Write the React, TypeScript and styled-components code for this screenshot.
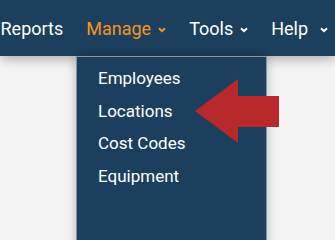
import React from "react";
import styled, { createGlobalStyle } from "styled-components";

const Global = createGlobalStyle`
  html, body { margin: 0; padding: 0; }
  body {
    background: #f4f4f4;
    font-family: Roboto, "Liberation Sans", Arial, sans-serif;
    overflow: hidden;
  }
`;

const Page = styled.div`
  position: relative;
  width: 335px;
  height: 100vh;
  min-height: 202px;
  overflow: hidden;
  background: #f4f4f4;
`;

const NavBar = styled.nav`
  position: relative;
  z-index: 2;
  height: 56px;
  background: #1c3f5e;
  box-shadow: 0 2px 12px rgba(0, 0, 0, 0.35);
  display: flex;
  align-items: center;
  gap: 23px;
  padding: 0 0 0 0.5px;
  white-space: nowrap;
`;

const NavItem = styled.div<{ $active?: boolean; $chevGap: number }>`
  position: relative;
  display: flex;
  align-items: center;
  gap: ${(p) => p.$chevGap}px;
  font-size: 18px;
  line-height: 21px;
  margin-top: 1px;
  color: ${(p) => (p.$active ? "#f6961e" : "#ffffff")};
`;

const Chevron = styled.svg`
  width: 8px;
  height: 6px;
  margin-top: 3px;
  flex: none;
`;

const Dropdown = styled.ul`
  position: absolute;
  z-index: 3;
  left: 76px;
  top: 56px;
  bottom: -20px;
  width: 191px;
  box-sizing: border-box;
  margin: 0;
  padding: 5px 0 0 21px;
  list-style: none;
  background: #1c3f5e;
  border: 1px solid #8d969e;
  box-shadow: 0 0 10px rgba(0, 0, 0, 0.25);
`;

const MenuItem = styled.li`
  font-size: 17px;
  line-height: 32.5px;
  color: #ffffff;
`;

const Arrow = styled.svg`
  position: absolute;
  z-index: 4;
  left: 0;
  top: 0;
  width: 335px;
  height: 202px;
  pointer-events: none;
`;

const ChevronIcon = ({ color }: { color: string }) => (
  <Chevron viewBox="0 0 8 6">
    <path d="M1 1.2 L4 4.2 L7 1.2" fill="none" stroke={color} strokeWidth="2" strokeLinecap="butt" strokeLinejoin="miter" />
  </Chevron>
);

export default function App() {
  return (
    <Page>
      <Global />
      <NavBar>
        <NavItem $chevGap={0}>Reports</NavItem>
        <NavItem $active $chevGap={7}>
          Manage <ChevronIcon color="#f6961e" />
        </NavItem>
        <NavItem $chevGap={7}>
          Tools <ChevronIcon color="#ffffff" />
        </NavItem>
        <NavItem $chevGap={12}>
          Help <ChevronIcon color="#ffffff" />
        </NavItem>
      </NavBar>
      <Dropdown>
        <MenuItem>Employees</MenuItem>
        <MenuItem>Locations</MenuItem>
        <MenuItem>Cost Codes</MenuItem>
        <MenuItem>Equipment</MenuItem>
      </Dropdown>
      <Arrow viewBox="0 0 335 202">
        <polygon points="195,111 238,79 238,96 279,96 279,127 238,127 238,143" fill="#b8292b" />
      </Arrow>
    </Page>
  );
}
